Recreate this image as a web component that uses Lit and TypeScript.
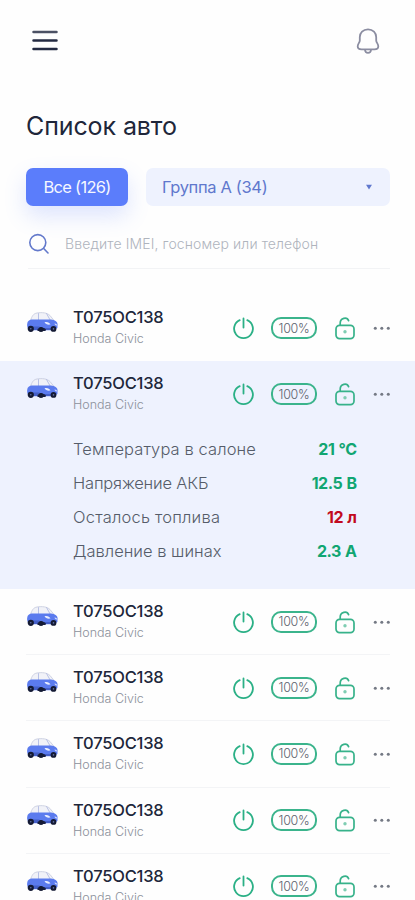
import { LitElement, html, css, svg } from "lit";
import { customElement } from "lit/decorators.js";
import { classMap } from "lit/directives/class-map.js";

const metrics = [
  { label: "Температура в салоне", value: "21 °C", alert: false, cls: "m1" },
  { label: "Напряжение АКБ", value: "12.5 В", alert: false, cls: "m2" },
  { label: "Осталось топлива", value: "12 л", alert: true, cls: "m3" },
  { label: "Давление в шинах", value: "2.3 А", alert: false, cls: "m4" },
];

const cars = Array.from({ length: 7 }, (_, i) => ({
  plate: "Т075ОС138",
  model: "Honda Civic",
  charge: "100%",
  open: i === 1,
  line: i > 1,
}));

const carShape = svg`
  <path d="M4.500 9.500C6 5 7.500 2.500 11 2C16 1.200 21 1.600 24 4.500L28 9.500Z" fill="#f1f2f8" stroke="#c3c8dc" stroke-width=".8"/>
  <path d="M12.500 2.200v7M20.500 2.400l3.600 6.600" stroke="#a9b4e0" stroke-width=".8" fill="none"/>
  <path d="M1.600 11C3 9 4.500 8.600 7 8.600L25 8.600C29 9 31.200 10.500 31.600 13L31.400 17L28 19.200L4 19.200C1 18 .6 14 1.600 11Z" fill="#5b7bee"/>
  <path d="M2 15.500h11l3 1.500h13v2H3z" fill="#4560c8"/>
  <path d="M18.500 11.200c2.500-.8 5 .1 6 2.300-2.800.5-5-.2-6-2.300z" fill="#e6ecff"/>
  <path d="M28.600 12.300l2.600 1.200v1.200l-2.200-.6z" fill="#c9d5ff"/>
  <path d="M11.500 18c2.500-2.200 6.500-2.200 8.500 .5l-.5 1.500h-8z" fill="#182044"/>
  <circle cx="4.800" cy="17.800" r="3.100" fill="#141a34"/>
  <circle cx="15" cy="18.600" r="2.500" fill="#141a34"/>
  <circle cx="27.500" cy="17.900" r="2.900" fill="#141a34"/>
  <circle cx="4.800" cy="17.800" r=".8" fill="#6474a8"/>
  <circle cx="27.500" cy="17.900" r=".8" fill="#6474a8"/>`;

@customElement("app-root")
export class AppRoot extends LitElement {
  static styles = css`
    :host {
      display: block;
      height: 900px;
      overflow: hidden;
      background: #fefefe;
      font-family: Inter, "Open Sans", sans-serif;
      color: #20263a;
    }
    * { box-sizing: border-box; }
    svg { display: block; flex: none; }
    .top {
      display: flex;
      justify-content: space-between;
      align-items: center;
      height: 82px;
      padding: 0 34px 0 32px;
    }
    h1 {
      margin: 27px 0 0 26px;
      font-size: 25px;
      line-height: 34px;
      font-weight: 400;
      letter-spacing: -0.1px;
      white-space: nowrap;
    }
    .filters {
      display: flex;
      gap: 18px;
      padding: 25px 25px 0 26px;
    }
    .all, .group {
      height: 38px;
      border-radius: 7px;
      display: flex;
      align-items: center;
      font-size: 16.5px;
      white-space: nowrap;
    }
    .all {
      width: 102px;
      justify-content: center;
      background: #5b7dfb;
      color: #f5f7ff;
      box-shadow: 0 10px 22px rgba(91, 125, 251, 0.2);
      letter-spacing: -0.7px;
    }
    .group {
      flex: 1;
      justify-content: space-between;
      padding: 0 17px 0 16px;
      background: #eef2fe;
      color: #6078cd;
      letter-spacing: -0.35px;
    }
    .search {
      display: flex;
      align-items: center;
      gap: 15px;
      height: 63px;
      margin: 0 25px 0 28px;
      padding-top: 13px;
      border-bottom: 1px solid #f2f3f5;
      font-size: 14px;
      font-weight: 300;
      letter-spacing: 0.11px;
      color: #afb4bd;
      white-space: nowrap;
    }
    .list { padding-top: 26px; }
    .item.open { height: 228px; background: #eef2fe; }
    .row {
      display: flex;
      align-items: center;
      height: 66.15px;
      margin: 0 25px 0 26px;
    }
    .line .row { border-bottom: 1px solid #f3f4f6; }
    .car { align-self: flex-start; margin-top: 16px; }
    .name {
      width: 159px;
      margin-left: 15px;
      flex: none;
      align-self: flex-start;
      padding-top: 12px;
      white-space: nowrap;
    }
    .plate { font-size: 16.5px; line-height: 21px; font-weight: 500; letter-spacing: -0.2px; }
    .model { font-size: 12.5px; line-height: 21px; font-weight: 300; color: #8b909b; }
    .pill {
      width: 46px;
      height: 22px;
      margin: 0 18px 0 17px;
      border: 2px solid #3bb48c;
      border-radius: 10px;
      display: flex;
      align-items: center;
      justify-content: center;
      font-size: 12.5px;
      font-weight: 300;
      letter-spacing: -0.3px;
      color: #5c626e;
      flex: none;
    }
    .power { margin-left: 1px; }
    .dots { margin-left: 18px; }
    .metrics { padding-top: 5px; }
    .metric {
      display: flex;
      justify-content: space-between;
      align-items: center;
      height: 34px;
      margin: 0 58.5px 0 73px;
      font-size: 16.5px;
      white-space: nowrap;
    }
    .label { font-weight: 300; color: #555c69; }
    .m1 { letter-spacing: 0.1px; }
    .m2 { letter-spacing: -0.18px; }
    .m3 { letter-spacing: 0.2px; }
    .value { font-size: 16px; font-weight: 700; color: #11a672; letter-spacing: -0.5px; word-spacing: 1px; }
    .value.alert { color: #c20a20; }
  `;

  private row(c: (typeof cars)[number]) {
    return html`<div class="item ${classMap({ open: c.open, line: c.line })}">
      <div class="row">
        <svg class="car" width="32" height="22" viewBox="0 0 32 22">${carShape}</svg>
        <div class="name">
          <div class="plate">${c.plate}</div>
          <div class="model">${c.model}</div>
        </div>
        <svg class="power" width="21" height="24" viewBox="0 0 21 24" fill="none" stroke="#2bb086" stroke-width="1.800" stroke-linecap="round">
          <path d="M6.700 4.100a9.400 9.400 0 1 0 7.600 0M10.500 2.500v9"/>
        </svg>
        <div class="pill">${c.charge}</div>
        <svg width="20" height="24" viewBox="0 0 20 24" fill="none" stroke="#37b28a" stroke-width="1.700" stroke-linecap="round">
          <rect x="1" y="9.300" width="18" height="13.400" rx="3.600"/>
          <path d="M5.200 9V7C5.200 2 12 .6 13.600 4.600"/>
          <circle cx="10" cy="15.800" r="1.700" fill="#7fcdb2" stroke="none"/>
        </svg>
        <svg class="dots" width="18" height="6" viewBox="0 0 18 6" fill="#747984">
          <circle cx="2.300" cy="3.300" r="1.500"/><circle cx="8.800" cy="3.300" r="1.500"/><circle cx="15.300" cy="3.300" r="1.500"/>
        </svg>
      </div>
      ${c.open
        ? html`<div class="metrics">
            ${metrics.map(
              (m) => html`<div class="metric">
                <span class="label ${m.cls}">${m.label}</span>
                <span class="value ${classMap({ alert: m.alert })}">${m.value}</span>
              </div>`
            )}
          </div>`
        : null}
    </div>`;
  }

  render() {
    return html`
      <div class="top">
        <svg width="26" height="24" viewBox="0 0 26 24" fill="none" stroke="#232a42" stroke-width="2.500" stroke-linecap="round">
          <path d="M1.500 3.100h23" stroke="#4b5164"/><path d="M1.500 11.600h23M1.500 20h23"/>
        </svg>
        <svg width="26" height="28" viewBox="0 0 26 28" fill="none" stroke="#8b8da1" stroke-width="1.800" stroke-linejoin="round">
          <path d="M13 2.300C8 2.300 4.800 5.900 4.800 10V13.500C4.800 15.600 2.700 16.800 2.700 19.200C2.700 21.300 4.500 22.300 6.500 22.300H19.500C21.500 22.300 23.300 21.300 23.300 19.200C23.300 16.800 21.200 15.600 21.200 13.500V10C21.200 5.900 18 2.300 13 2.300Z"/>
          <path d="M10 22.700C10.300 26.900 15.700 26.900 16 22.700"/>
        </svg>
      </div>
      <h1>Список авто</h1>
      <div class="filters">
        <div class="all">Все (126)</div>
        <div class="group">
          <span>Группа А (34)</span>
          <svg width="8" height="6" viewBox="0 0 8 6"><path d="M1 .8h6L4 5.500z" fill="#6078cd"/></svg>
        </div>
      </div>
      <div class="search">
        <svg width="22" height="22" viewBox="0 0 22 22" fill="none" stroke="#6379cb" stroke-width="1.600" stroke-linecap="round">
          <circle cx="9.800" cy="9.600" r="8"/><path d="M15.700 15.500l4.300 4.500"/>
        </svg>
        <span>Введите IMEI, госномер или телефон</span>
      </div>
      <div class="list">${cars.map((c) => this.row(c))}</div>
    `;
  }
}
